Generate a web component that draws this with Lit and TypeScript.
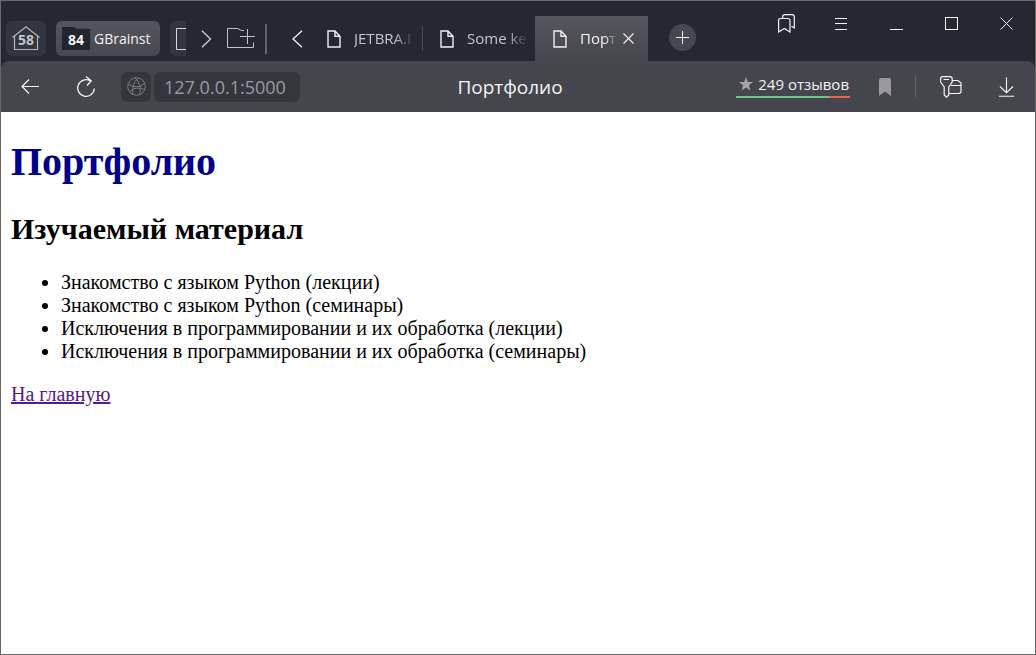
import { LitElement, html, css, svg } from "lit";
import type { SVGTemplateResult } from "lit";
import { customElement, property } from "lit/decorators.js";
import { classMap } from "lit/directives/class-map.js";

const icon = (w: number, h: number, body: SVGTemplateResult) => html`
  <svg width=${w} height=${h} viewBox="0 0 ${w} ${h}" fill="none" stroke="currentColor" aria-hidden="true">${body}</svg>
`;

const icons = {
  home: icon(28, 25, svg`<path stroke="#b4b5b9" stroke-width="1.2" d="M0.5 11.5 L14 0.8 L27.5 11.5 M2.5 10 V23.5 H25.5 V10"/>`),
  folderAdd: icon(28, 21, svg`<path d="M0.5 0.5 H10.5 L14.5 2.5 H17 M0.5 0.5 V19.5 H26.5 V14.5 M20.5 1 V16 M13 8.5 H28"/>`),
  folderCut: icon(10, 24, svg`<path d="M10 1.5 H0.5 V22.5 H10"/>`),
  right: icon(11, 18, svg`<path stroke-width="1.3" d="M1 0.8 L9.5 9 L1 17.2"/>`),
  left: icon(11, 18, svg`<path stroke-width="1.3" d="M10 0.8 L1 9 L10 17.2"/>`),
  page: icon(14, 18, svg`<path stroke-width="1.4" d="M1 1 H8 L13 6.2 V17 H1 Z M8 1 V6.2 H13"/>`),
  close: icon(11, 11, svg`<path stroke-width="1.1" d="M0.5 0.5 L10.5 10.5 M10.5 0.5 L0.5 10.5"/>`),
  plus: icon(13, 13, svg`<path d="M6.5 0 V13 M0 6.5 H13"/>`),
  saved: icon(17, 19, svg`<path stroke-width="1.2" d="M0.6 18 V6.5 Q0.6 4.5 2.6 4.5 H10 Q12 4.5 12 6.5 V18 L6.3 14.5 Z M4.6 4.2 V3 Q4.6 0.6 7 0.6 H14 Q16.3 0.6 16.3 3 V14 L13.5 12.3"/>`),
  menu: icon(13, 12, svg`<path d="M0 0.5 H12 M0 5.5 H12 M0 11.5 H12"/>`),
  minimize: icon(13, 13, svg`<path d="M0 12.5 H13"/>`),
  maximize: icon(13, 13, svg`<rect x="0.5" y="0.5" width="12" height="12"/>`),
  exit: icon(13, 13, svg`<path d="M0.5 0.5 L12.5 12.5 M12.5 0.5 L0.5 12.5"/>`),
  back: icon(18, 15, svg`<path stroke-width="1.2" d="M18 7.5 H1 M8 0.5 L1 7.5 L8 14.5"/>`),
  reload: icon(18, 22, svg`<path stroke-width="1.3" d="M13.5 5 A8.3 8.3 0 1 0 17.3 12.5 M9 0.5 L14.2 4.8 L10 9.5"/>`),
  globe: icon(19, 19, svg`<g stroke="#7b7b82"><circle cx="9.5" cy="9.5" r="8.8"/><path d="M1.2 7 Q9 13 17.5 6.5 M2.5 14.5 Q9 9 17.8 12.5 M11.5 0.8 Q4 7 6 17.6 M8 0.8 Q15.5 8.5 12.5 17.8"/></g>`),
  star: icon(14, 14, svg`<path stroke="none" fill="#a6a6aa" d="M7 0 L8.8 5 H14 L9.9 8.3 L11.4 13.6 L7 10.5 L2.6 13.6 L4.1 8.3 L0 5 H5.2 Z"/>`),
  bookmark: icon(12, 18, svg`<path stroke="none" fill="#99999d" d="M0 2 Q0 0 2 0 H10 Q12 0 12 2 V18 L6 13.5 L0 18 Z"/>`),
  keys: icon(22, 22, svg`<path stroke-width="1.2" d="M2.5 0.6 H10 Q12.2 0.6 12.2 3 V6 L8.8 11 V19 L6.5 21.2 L4.2 19 V11 L0.6 6 V3 Q0.6 0.6 2.5 0.6 Z M3.5 3.5 H9 M12 4.5 H18 L21 7 V15 Q21 17.5 18.5 17.5 H9 M11 9.5 H21"/>`),
  download: icon(16, 20, svg`<path stroke-width="1.1" d="M7.5 0.5 V15.5 M1 9.5 L7.5 15.7 L14 9.5 M0 19.3 H15"/>`),
};

@customElement("browser-tab")
class BrowserTab extends LitElement {
  @property() label = "";
  @property({ type: Boolean }) active = false;

  static styles = css`
    :host { display: block; }
    .tab {
      box-sizing: border-box;
      display: flex;
      align-items: center;
      height: 45px;
      width: 112px;
      padding-left: 17px;
      color: #c6c7ca;
    }
    .active {
      width: 113px;
      padding-left: 18px;
      color: #f4f4f5;
      background: linear-gradient(#56565f, #45454e);
    }
    button {
      border: 0;
      padding: 0;
      background: none;
      color: inherit;
      font: 15px/20px "Open Sans", "Noto Sans", sans-serif;
    }
    .pick { display: flex; align-items: center; gap: 13px; }
    .pick svg { color: #f0f0f0; flex: none; }
    .label {
      width: 62px;
      padding-bottom: 1px;
      overflow: hidden;
      white-space: nowrap;
      text-align: left;
      mask-image: linear-gradient(to right, #000 64%, transparent 98%);
    }
    .active .label { width: 38px; }
    .close { display: flex; margin-left: 5px; }
  `;

  render() {
    return html`
      <div class=${classMap({ tab: true, active: this.active })}>
        <button class="pick">${icons.page}<span class="label">${this.label}</span></button>
        ${this.active ? html`<button class="close" aria-label="Закрыть вкладку">${icons.close}</button>` : ""}
      </div>
    `;
  }
}

@customElement("app-root")
class AppRoot extends LitElement {
  private courses = [
    "Знакомство с языком Python (лекции)",
    "Знакомство с языком Python (семинары)",
    "Исключения в программировании и их обработка (лекции)",
    "Исключения в программировании и их обработка (семинары)",
  ];

  static styles = css`
    :host { display: block; }
    .window {
      box-sizing: border-box;
      display: flex;
      flex-direction: column;
      min-height: 100vh;
      border: 1px solid #6b6865;
      background: #fff;
      font-family: "Open Sans", "Noto Sans", sans-serif;
    }
    button {
      display: flex;
      align-items: center;
      justify-content: center;
      box-sizing: border-box;
      border: 0;
      padding: 0;
      background: none;
      color: #f4f4f5;
      font: inherit;
    }
    svg { flex: none; }
    .chrome { background: #252830; }
    .strip { display: flex; justify-content: space-between; height: 60px; }
    .left { display: flex; align-items: flex-end; }
    .groups {
      display: flex;
      align-items: center;
      height: 45px;
      padding-left: 5px;
    }
    .group { height: 35px; border-radius: 6px; background: #32353d; }
    .home { display: grid; width: 40px; margin-right: 10px; }
    .home svg, .home span { grid-area: 1 / 1; }
    .home span { padding-top: 2px; font-size: 14px; line-height: 20px; font-weight: 700; color: #c3c4c7; }
    .current {
      width: 104px;
      margin-right: 10px;
      padding-left: 6px;
      gap: 4px;
      justify-content: flex-start;
      background: linear-gradient(#55555e, #484851);
      font-size: 14px;
      white-space: nowrap;
    }
    .count {
      width: 28px;
      height: 23px;
      line-height: 25px;
      background: #22252d;
      font-weight: 700;
      clip-path: polygon(0 0, 44% 0, 52% 8%, 100% 8%, 100% 100%, 0 100%);
    }
    .cut { width: 16px; border-radius: 6px 0 0 6px; padding-left: 6px; color: #d9d9dc; }
    .next { width: 41px; height: 35px; color: #d2d3d6; }
    .add { width: 28px; height: 35px; color: #c3c4c8; }
    .rule { width: 2px; height: 30px; margin-left: 10px; background: #62646b; }
    .prev { width: 43px; height: 35px; padding-left: 18px; }
    .split { width: 1px; height: 25px; margin-bottom: 10px; background: #484a52; }
    .new {
      width: 27px;
      height: 27px;
      margin: 0 0 10px 21px;
      border-radius: 50%;
      background: #464750;
    }
    .controls { display: flex; margin-right: 1px; }
    .controls button { width: 55px; height: 45px; }
    .bar {
      display: flex;
      align-items: center;
      height: 51px;
      padding-left: 1px;
      border-radius: 8px 8px 0 0;
      background: #45454e;
    }
    .tool { width: 56px; height: 50px; }
    .site {
      width: 30px;
      height: 30px;
      margin-left: 7px;
      border-radius: 6px;
      background: #34363e;
    }
    .address {
      box-sizing: border-box;
      width: 146px;
      height: 30px;
      margin-left: 3px;
      padding: 0 10px;
      border: 0;
      border-radius: 6px;
      background: #34363e;
      color: #9a9a9f;
      font: 18px/30px "Open Sans", "Noto Sans", sans-serif;
    }
    .title {
      flex: 1;
      padding-right: 16px;
      text-align: center;
      color: #f4f4f5;
      font-size: 19px;
      line-height: 30px;
    }
    .reviews {
      display: block;
      width: 114px;
      color: #f4f4f5;
      font-size: 15px;
      line-height: 18px;
      text-decoration: none;
      white-space: nowrap;
    }
    .score { display: flex; align-items: center; justify-content: space-between; padding: 0 1px 3px 3px; }
    .meter { display: flex; height: 2px; background: #e8664f; }
    .good { width: 82%; background: #6fc48a; }
    .save { margin-left: 7px; }
    .thin { width: 1px; height: 21px; margin: 0 7px 0 2px; background: #66666e; }
    .page {
      flex: 1;
      padding: 0 10px;
      color: #000;
      font: 20px/23px "Liberation Serif", "Times New Roman", serif;
    }
    h1 { margin: 27px 0; font-size: 40px; line-height: 45px; color: #00008b; }
    h2 { margin: 25px 0; font-size: 30px; line-height: 35px; }
    ul { margin: 20px 0; padding-left: 50px; }
    .home-link { color: #551a8b; }
  `;

  render() {
    return html`
      <div class="window">
        <header class="chrome">
          <div class="strip">
            <div class="left">
              <div class="groups">
                <button class="group home">${icons.home}<span>58</span></button>
                <button class="group current"><span class="count">84</span><span>GBrainst</span></button>
                <button class="group cut" aria-label="Группа вкладок">${icons.folderCut}</button>
                <button class="next" aria-label="Вперёд по группам">${icons.right}</button>
                <button class="add" aria-label="Новая группа">${icons.folderAdd}</button>
                <div class="rule"></div>
                <button class="prev" aria-label="Назад по вкладкам">${icons.left}</button>
              </div>
              <browser-tab label="JETBRA.I"></browser-tab>
              <div class="split"></div>
              <browser-tab label="Some ke"></browser-tab>
              <browser-tab label="Порт" active></browser-tab>
              <button class="new" aria-label="Новая вкладка">${icons.plus}</button>
            </div>
            <div class="controls">
              <button aria-label="Коллекции">${icons.saved}</button>
              <button aria-label="Меню">${icons.menu}</button>
              <button aria-label="Свернуть">${icons.minimize}</button>
              <button aria-label="Развернуть">${icons.maximize}</button>
              <button aria-label="Закрыть">${icons.exit}</button>
            </div>
          </div>
          <nav class="bar">
            <button class="tool" aria-label="Назад">${icons.back}</button>
            <button class="tool" aria-label="Обновить">${icons.reload}</button>
            <button class="site" aria-label="Сведения о сайте">${icons.globe}</button>
            <input class="address" aria-label="Адрес" .value=${"127.0.0.1:5000"} />
            <div class="title">Портфолио</div>
            <a class="reviews" href="#reviews">
              <span class="score">${icons.star}<span>249 отзывов</span></span>
              <span class="meter"><span class="good"></span></span>
            </a>
            <button class="tool save" aria-label="В закладки">${icons.bookmark}</button>
            <div class="thin"></div>
            <button class="tool" aria-label="Пароли">${icons.keys}</button>
            <button class="tool" aria-label="Загрузки">${icons.download}</button>
          </nav>
        </header>
        <main class="page">
          <h1>Портфолио</h1>
          <h2>Изучаемый материал</h2>
          <ul>
            ${this.courses.map((course) => html`<li>${course}</li>`)}
          </ul>
          <a class="home-link" href="#home">На главную</a>
        </main>
      </div>
    `;
  }
}
